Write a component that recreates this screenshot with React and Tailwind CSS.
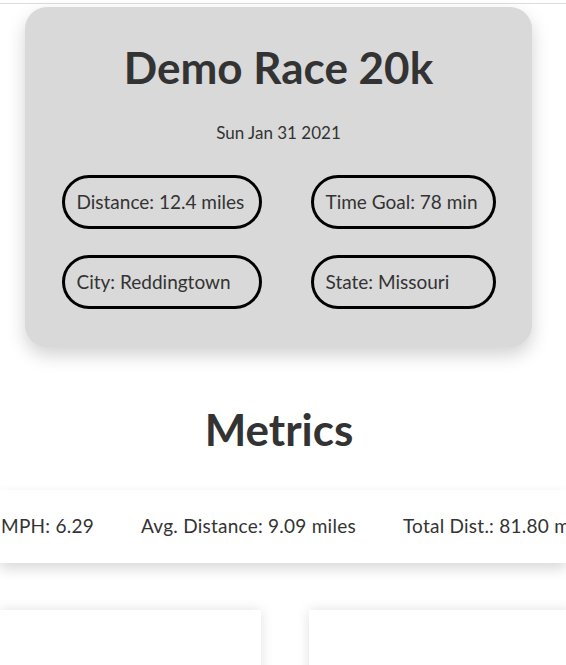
import React from 'react';

const race = {
  name: 'Demo Race 20k',
  date: 'Sun Jan 31 2021',
  details: [
    'Distance: 12.4 miles',
    'Time Goal: 78 min',
    'City: Reddingtown',
    'State: Missouri',
  ],
};

const metrics = ['MPH: 6.29', 'Avg. Distance: 9.09 miles', 'Total Dist.: 81.80 miles'];

const Pill = ({ children }) => (
  <div className="h-[54px] flex items-center px-[12px] border-[3px] border-black rounded-full text-[19px] text-[#333] whitespace-nowrap">
    {children}
  </div>
);

const App = () => {
  return (
    <div className="min-h-screen bg-white overflow-hidden text-[#333]" style={{ fontFamily: 'Lato, "Open Sans", sans-serif' }}>
      <div className="h-[4px] border-b border-[#ddd]" />

      <div className="pt-[3px] pl-[25px]">
        <div className="w-[507px] h-[340px] rounded-[22px] bg-[#d9d9d9] shadow-[0_8px_18px_rgba(0,0,0,0.18)] flex flex-col items-center pt-[30px]">
          <h1 className="text-[44px] font-bold leading-[60px]">{race.name}</h1>
          <p className="mt-[24px] text-[17px] leading-[24px]">{race.date}</p>
          <div className="mt-[30px] grid grid-cols-[200px_185px] gap-x-[49px] gap-y-[26px]">
            {race.details.map((d) => (
              <Pill key={d}>{d}</Pill>
            ))}
          </div>
        </div>
      </div>

      <h2 className="mt-[52px] pr-[8px] text-center text-[44px] font-bold leading-[60px]">Metrics</h2>

      <div className="mt-[31px] h-[73px] bg-white shadow-[0_6px_12px_rgba(0,0,0,0.15)] flex items-center gap-[47px] pl-[1px] text-[19px] tracking-[0.25px] whitespace-nowrap">
        {metrics.map((m) => (
          <span key={m}>{m}</span>
        ))}
      </div>

      <div className="mt-[47px] flex gap-[48px]">
        <div className="w-[261px] h-[80px] shrink-0 bg-white shadow-[0_0_12px_rgba(0,0,0,0.12)]" />
        <div className="w-[261px] h-[80px] shrink-0 bg-white shadow-[0_0_12px_rgba(0,0,0,0.12)]" />
      </div>
    </div>
  );
};

export default App;
